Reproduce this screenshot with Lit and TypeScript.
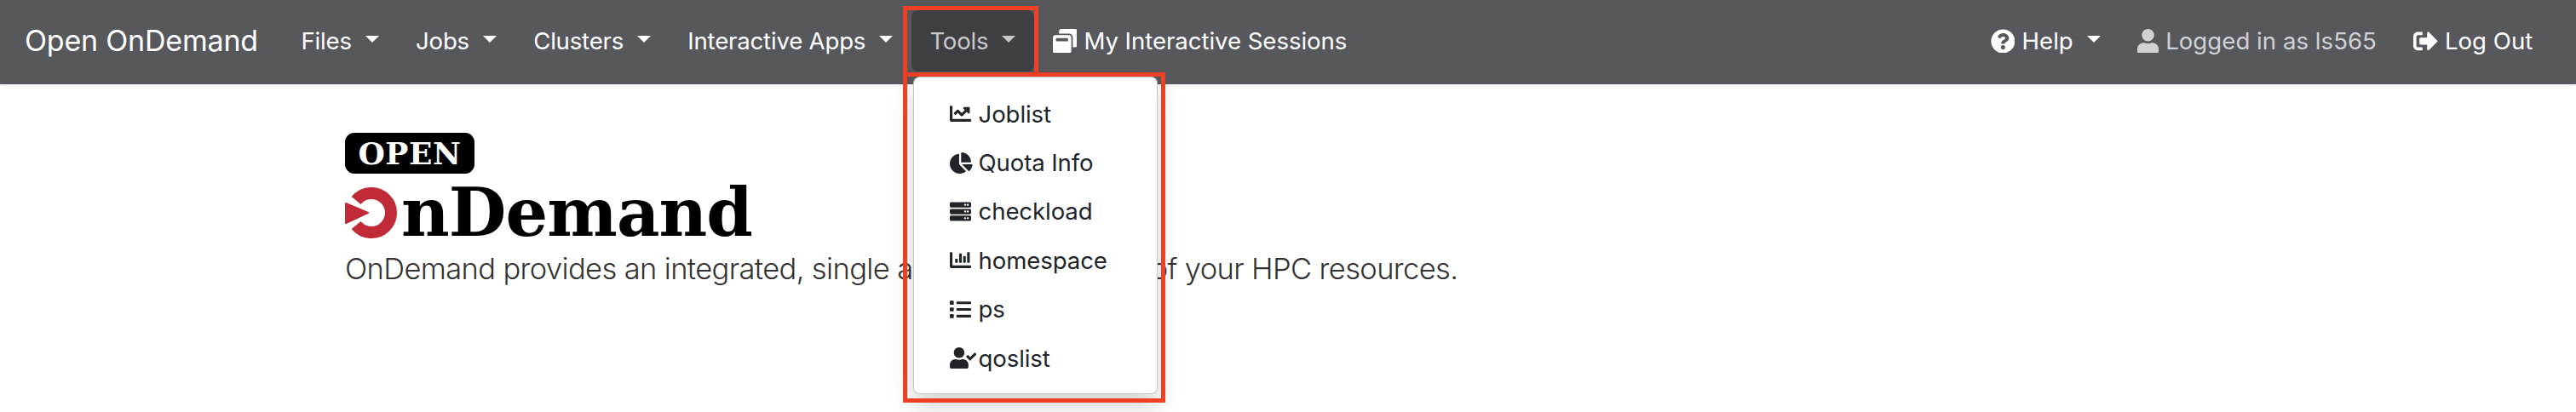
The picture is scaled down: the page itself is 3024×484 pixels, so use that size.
import { LitElement, html, css, svg } from "lit";
import { customElement } from "lit/decorators.js";

const P = {
  line: "M496 384H64V80c0-8.84-7.16-16-16-16H16C7.16 64 0 71.16 0 80v336c0 17.67 14.33 32 32 32h464c8.84 0 16-7.16 16-16v-32c0-8.84-7.16-16-16-16zM464 96H345.94c-21.38 0-32.09 25.85-16.97 40.97l32.4 32.4L288 242.75l-73.37-73.37c-12.5-12.5-32.76-12.5-45.25 0l-68.69 68.69c-6.25 6.25-6.25 16.38 0 22.63l22.62 22.62c6.25 6.25 16.38 6.25 22.63 0L192 237.25l73.37 73.37c12.5 12.5 32.76 12.5 45.25 0l96-96 32.4 32.4c15.12 15.12 40.97 4.41 40.97-16.97V112c.01-8.84-7.15-16-15.99-16z",
  pie: "M527.79 288H290.5l158.03 158.03c6.04 6.04 15.98 6.53 22.19.68 38.7-36.46 65.32-85.61 73.13-140.86 1.34-9.46-6.51-17.85-16.06-17.85zm-15.83-64.8C503.72 103.74 408.26 8.28 288.8.04 279.68-.59 272 7.1 272 16.24V240h223.77c9.14 0 16.82-7.68 16.19-16.8zM224 288V50.71c0-9.55-8.39-17.4-17.84-16.06C86.99 51.49-4.1 155.6.14 280.37 4.5 408.51 114.83 513.59 243.03 511.98c50.4-.63 96.97-16.87 135.26-44.03 7.9-5.6 8.42-17.23 1.57-24.08L224 288z",
  server: "M480 160H32c-17.673 0-32-14.327-32-32V64c0-17.673 14.327-32 32-32h448c17.673 0 32 14.327 32 32v64c0 17.673-14.327 32-32 32zm-48-88c-13.255 0-24 10.745-24 24s10.745 24 24 24 24-10.745 24-24-10.745-24-24-24zm-64 0c-13.255 0-24 10.745-24 24s10.745 24 24 24 24-10.745 24-24-10.745-24-24-24zm112 248H32c-17.673 0-32-14.327-32-32v-64c0-17.673 14.327-32 32-32h448c17.673 0 32 14.327 32 32v64c0 17.673-14.327 32-32 32zm-48-88c-13.255 0-24 10.745-24 24s10.745 24 24 24 24-10.745 24-24-10.745-24-24-24zm-64 0c-13.255 0-24 10.745-24 24s10.745 24 24 24 24-10.745 24-24-10.745-24-24-24zm112 248H32c-17.673 0-32-14.327-32-32v-64c0-17.673 14.327-32 32-32h448c17.673 0 32 14.327 32 32v64c0 17.673-14.327 32-32 32zm-48-88c-13.255 0-24 10.745-24 24s10.745 24 24 24 24-10.745 24-24-10.745-24-24-24zm-64 0c-13.255 0-24 10.745-24 24s10.745 24 24 24 24-10.745 24-24-10.745-24-24-24z",
  bar: "M332.8 320h38.4c6.4 0 12.8-6.4 12.8-12.8V172.8c0-6.4-6.4-12.8-12.8-12.8h-38.4c-6.4 0-12.8 6.4-12.8 12.8v134.4c0 6.4 6.4 12.8 12.8 12.8zm96 0h38.4c6.4 0 12.8-6.4 12.8-12.8V76.8c0-6.4-6.4-12.8-12.8-12.8h-38.4c-6.4 0-12.8 6.4-12.8 12.8v230.4c0 6.4 6.4 12.8 12.8 12.8zm-288 0h38.4c6.4 0 12.8-6.4 12.8-12.8v-70.4c0-6.4-6.4-12.8-12.8-12.8h-38.4c-6.4 0-12.8 6.4-12.8 12.8v70.4c0 6.4 6.4 12.8 12.8 12.8zm96 0h38.4c6.4 0 12.8-6.4 12.8-12.8V108.8c0-6.4-6.4-12.8-12.8-12.8h-38.4c-6.4 0-12.8 6.4-12.8 12.8v198.4c0 6.4 6.4 12.8 12.8 12.8zM496 384H64V80c0-8.84-7.16-16-16-16H16C7.16 64 0 71.16 0 80v336c0 17.67 14.33 32 32 32h464c8.84 0 16-7.16 16-16v-32c0-8.84-7.16-16-16-16z",
  list: "M80 368H16a16 16 0 0 0-16 16v64a16 16 0 0 0 16 16h64a16 16 0 0 0 16-16v-64a16 16 0 0 0-16-16zm0-320H16A16 16 0 0 0 0 64v64a16 16 0 0 0 16 16h64a16 16 0 0 0 16-16V64a16 16 0 0 0-16-16zm0 160H16a16 16 0 0 0-16 16v64a16 16 0 0 0 16 16h64a16 16 0 0 0 16-16v-64a16 16 0 0 0-16-16zm416 176H176a16 16 0 0 0-16 16v32a16 16 0 0 0 16 16h320a16 16 0 0 0 16-16v-32a16 16 0 0 0-16-16zm0-320H176a16 16 0 0 0-16 16v32a16 16 0 0 0 16 16h320a16 16 0 0 0 16-16V80a16 16 0 0 0-16-16zm0 160H176a16 16 0 0 0-16 16v32a16 16 0 0 0 16 16h320a16 16 0 0 0 16-16v-32a16 16 0 0 0-16-16z",
  ucheck: "M224 256c70.7 0 128-57.3 128-128S294.7 0 224 0 96 57.3 96 128s57.3 128 128 128zm89.6 32h-16.7c-22.2 10.2-46.9 16-72.9 16s-50.6-5.8-72.9-16h-16.7C60.2 288 0 348.2 0 422.4V464c0 26.5 21.5 48 48 48h352c26.5 0 48-21.5 48-48v-41.6c0-74.2-60.2-134.4-134.4-134.4zm323-128.4l-27.8-28.1c-4.6-4.7-12.1-4.7-16.8-.1l-104.8 104-45.5-45.8c-4.6-4.7-12.1-4.7-16.8-.1l-28.1 27.9c-4.7 4.6-4.7 12.1-.1 16.8l81.7 82.3c4.6 4.7 12.1 4.7 16.8.1l141.3-140.2c4.6-4.7 4.7-12.2.1-16.8z",
  user: "M224 256c70.7 0 128-57.3 128-128S294.7 0 224 0 96 57.3 96 128s57.3 128 128 128zm89.6 32h-16.7c-22.2 10.2-46.9 16-72.9 16s-50.6-5.8-72.9-16h-16.7C60.2 288 0 348.2 0 422.4V464c0 26.5 21.5 48 48 48h352c26.5 0 48-21.5 48-48v-41.6c0-74.2-60.2-134.4-134.4-134.4z",
  help: "M504 256c0 136.997-111.043 248-248 248S8 392.997 8 256C8 119.083 119.043 8 256 8s248 111.083 248 248zM262.655 90c-54.497 0-89.255 22.957-116.549 63.758-3.536 5.286-2.353 12.415 2.715 16.258l34.699 26.31c5.205 3.947 12.621 3.008 16.665-2.122 17.864-22.658 30.113-35.797 57.303-35.797 20.429 0 45.698 13.148 45.698 32.958 0 14.976-12.363 22.667-32.534 33.976C247.128 238.528 216 254.941 216 296v4c0 6.627 5.373 12 12 12h56c6.627 0 12-5.373 12-12v-1.333c0-28.462 83.186-29.647 83.186-106.667 0-58.002-60.165-102-116.531-102zM256 338c-25.365 0-46 20.635-46 46 0 25.364 20.635 46 46 46s46-20.636 46-46c0-25.365-20.635-46-46-46z",
  out: "M497 273L329 441c-15 15-41 4.5-41-17v-96H152c-13.3 0-24-10.7-24-24v-96c0-13.3 10.7-24 24-24h136V88c0-21.4 25.9-32 41-17l168 168c9.3 9.4 9.3 24.6 0 34zM192 436v-40c0-6.6-5.4-12-12-12H96c-17.7 0-32-14.3-32-32V160c0-17.7 14.3-32 32-32h84c6.6 0 12-5.4 12-12V76c0-6.6-5.4-12-12-12H96c-53 0-96 43-96 96v192c0 53 43 96 96 96h84c6.6 0 12-5.4 12-12z",
  win: "M512 48v288c0 26.5-21.5 48-48 48h-48V176c0-44.1-35.9-80-80-80H128V48c0-26.5 21.5-48 48-48h288c26.5 0 48 21.5 48 48zM384 176v288c0 26.5-21.5 48-48 48H48c-26.5 0-48-21.5-48-48V176c0-26.5 21.5-48 48-48h288c26.5 0 48 21.5 48 48zm-68 28c0-6.6-5.4-12-12-12H76c-6.6 0-12 5.4-12 12v52h252v-52z",
};

const icon = (d: string, w = 512, size = 25) =>
  html`<svg class="ico" viewBox="0 0 ${w} 512" style="width:${(w / 512) * size}px;height:${size}px">${svg`<path fill="currentColor" d=${d}></path>`}</svg>`;

const menu: [string, number, string][] = [
  [P.line, 512, "Joblist"],
  [P.pie, 544, "Quota Info"],
  [P.server, 512, "checkload"],
  [P.bar, 512, "homespace"],
  [P.list, 512, "ps"],
  [P.ucheck, 640, "qoslist"],
];

@customElement("app-root")
export class AppRoot extends LitElement {
  static styles = css`
    :host {
      display: block;
      position: relative;
      height: 484px;
      overflow: hidden;
      background: #fff;
      font-family: Inter, "Liberation Sans", sans-serif;
      color: #333;
    }
    .nav {
      display: flex;
      align-items: flex-start;
      height: 99px;
      box-sizing: border-box;
      padding: 12px 29px 0;
      background: #57585c;
      box-shadow: 0 1px 6px rgba(0, 0, 0, 0.08);
      position: relative;
    }
    .brand {
      font-size: 34px;
      line-height: 72px;
      color: #fff;
      margin-right: 29px;
      white-space: nowrap;
      letter-spacing: -0.2px;
    }
    .link {
      display: flex;
      align-items: center;
      height: 72px;
      padding: 0 21.6px;
      font-size: 27.6px;
      color: #fff;
      white-space: nowrap;
      position: relative;
      box-sizing: border-box;
      letter-spacing: -0.2px;
    }
    .link .ico {
      margin-right: 8px;
    }
    .sessions {
      letter-spacing: -0.05px;
    }
    .wide {
      letter-spacing: 0.03px;
    }
    .muted {
      color: #d0d1d3;
    }
    .caret {
      width: 0;
      height: 0;
      border-top: 8.6px solid currentColor;
      border-left: 8.6px solid transparent;
      border-right: 8.6px solid transparent;
      margin-left: 16px;
      margin-top: -4px;
    }
    .active {
      background: #3e3f42;
      border-radius: 8px;
      color: #c9c9ca;
    }
    .spacer {
      flex: 1;
    }
    .menu {
      position: absolute;
      left: 1072px;
      top: 90px;
      width: 286.5px;
      height: 373px;
      box-sizing: border-box;
      padding: 14px 0;
      background: #fff;
      border: 1px solid rgba(0, 0, 0, 0.22);
      border-radius: 8px;
      box-shadow: 0 14px 29px rgba(0, 0, 0, 0.175);
      color: #212529;
      font-size: 27.6px;
    }
    .item {
      display: grid;
      grid-template-columns: 33.5px 1fr;
      align-items: center;
      height: 57.4px;
      padding-left: 42px;
      letter-spacing: -0.1px;
    }
    .main {
      padding: 57px 0 0 405px;
    }
    .pill {
      display: flex;
      align-items: center;
      justify-content: center;
      width: 152px;
      height: 48px;
      box-sizing: border-box;
      background: #000;
      color: #fff;
      border-radius: 11px;
      font-family: "DejaVu Serif", serif;
      font-weight: 700;
      font-size: 36px;
      line-height: 48px;
      letter-spacing: 0.6px;
    }
    .wordmark {
      display: flex;
      align-items: flex-end;
      height: 62px;
      margin-top: 15px;
      color: #000;
    }
    .wordmark svg {
      width: 62px;
      height: 62px;
      flex: none;
    }
    .word {
      font-family: "DejaVu Serif", serif;
      font-weight: 700;
      font-size: 78px;
      line-height: 62px;
      margin-left: 4px;
      letter-spacing: -0.9px;
      white-space: nowrap;
    }
    .lead {
      margin: 10px 0 0;
      font-size: 34.5px;
      line-height: 50px;
      font-weight: 300;
      letter-spacing: -0.63px;
      color: #333;
      white-space: nowrap;
    }
    .box {
      position: absolute;
      box-sizing: border-box;
      border: 5px solid #ee4024;
      pointer-events: none;
    }
    .box1 {
      left: 1060px;
      top: 7px;
      width: 159px;
      height: 83px;
    }
    .box2 {
      left: 1060px;
      top: 85px;
      width: 308px;
      height: 388px;
    }
  `;

  private link(label: string, opts: { d?: string; w?: number; caret?: boolean; cls?: string } = {}) {
    return html`<div class="link ${opts.cls ?? ""}">
      ${opts.d ? icon(opts.d, opts.w ?? 512, 28.8) : ""}<span>${label}</span>${opts.caret
        ? html`<span class="caret"></span>`
        : ""}
    </div>`;
  }

  render() {
    return html`
      <div class="nav">
        <div class="brand">Open OnDemand</div>
        ${this.link("Files", { caret: true })} ${this.link("Jobs", { caret: true })}
        ${this.link("Clusters", { caret: true })} ${this.link("Interactive Apps", { caret: true })}
        ${this.link("Tools", { caret: true, cls: "active" })}
        ${this.link("My Interactive Sessions", { d: P.win, cls: "sessions" })}
        <div class="spacer"></div>
        ${this.link("Help", { d: P.help, caret: true, cls: "wide" })}
        ${this.link("Logged in as ls565", { d: P.user, w: 448, cls: "muted wide" })}
        ${this.link("Log Out", { d: P.out, cls: "wide" })}
      </div>
      <div class="main">
        <div class="pill">OPEN</div>
        <div class="wordmark">
          <svg viewBox="0 0 62 62">
            <path d="M13.1 16.5A23 23 0 1 1 13.1 45.5" fill="none" stroke="#c02b37" stroke-width="14"></path>
            <path d="M1 20L27 31L1 43Z" fill="#c02b37" stroke="#c02b37" stroke-width="2" stroke-linejoin="round"></path>
          </svg>
          <span class="word">nDemand</span>
        </div>
        <p class="lead">OnDemand provides an integrated, single access point for all of your HPC resources.</p>
      </div>
      <div class="menu">
        ${menu.map(
          ([d, w, t]) => html`<div class="item">${icon(d, w)}<span>${t}</span></div>`
        )}
      </div>
      <div class="box box1"></div>
      <div class="box box2"></div>
    `;
  }
}
